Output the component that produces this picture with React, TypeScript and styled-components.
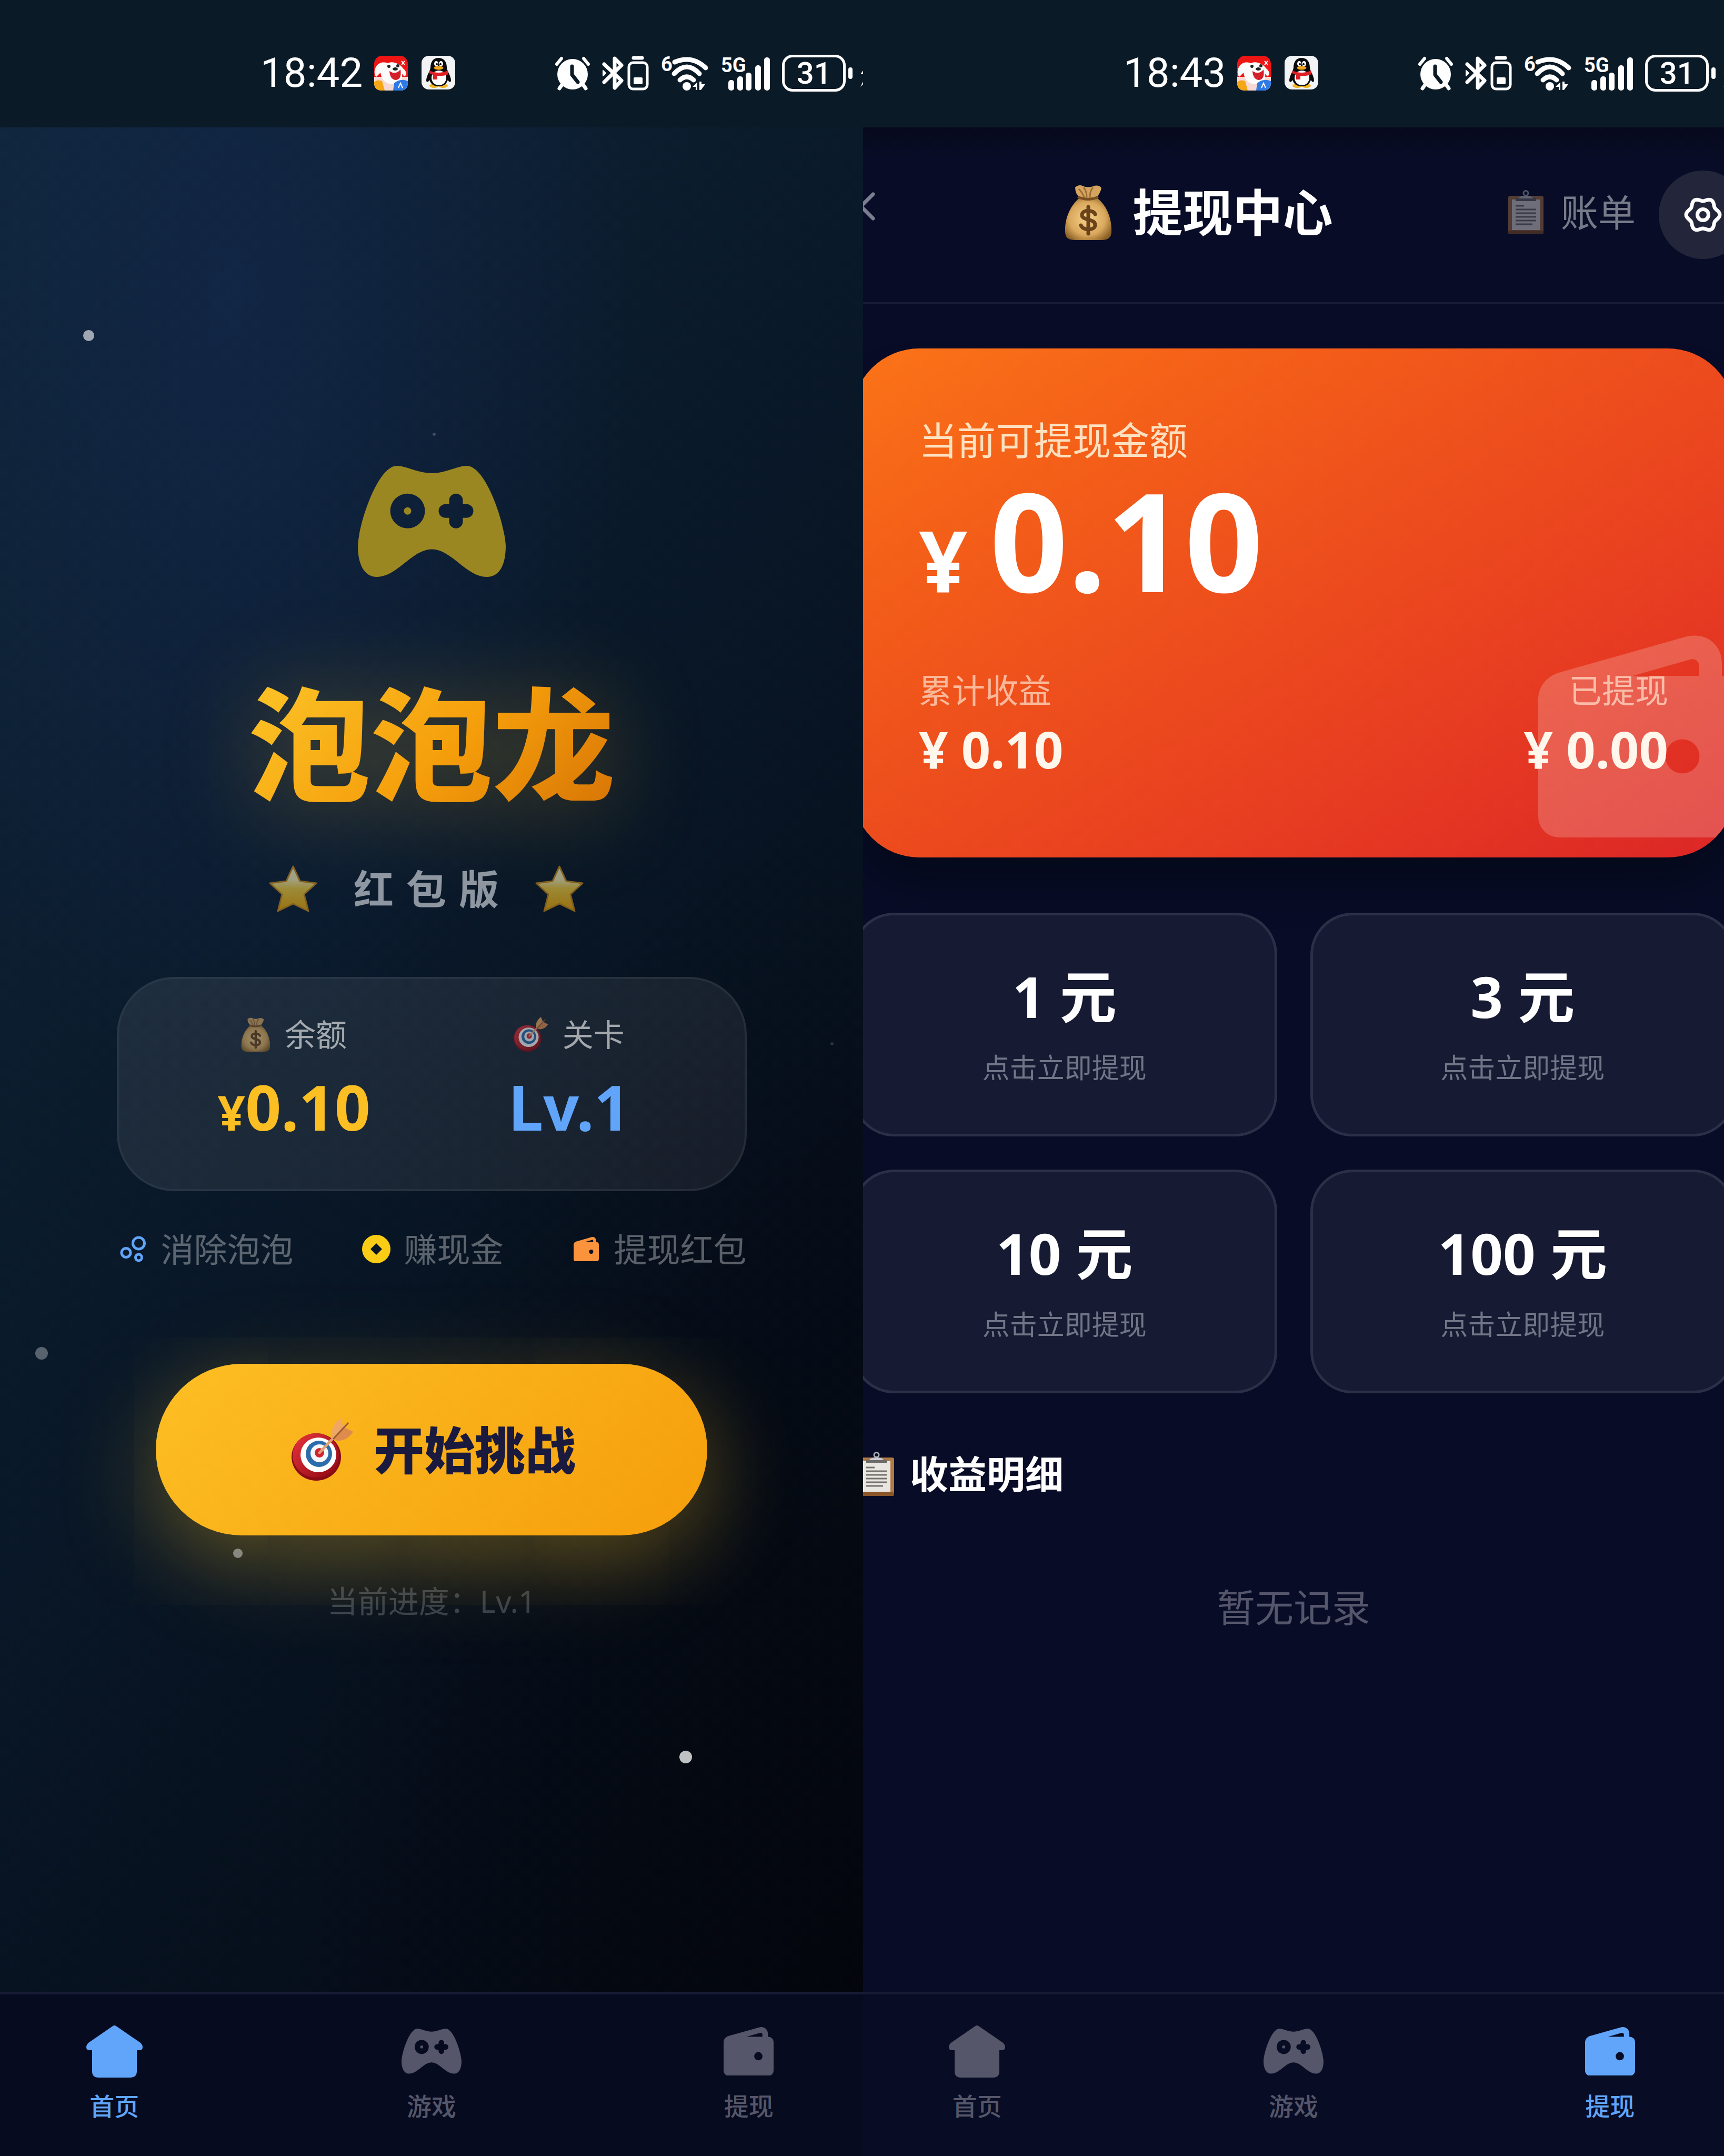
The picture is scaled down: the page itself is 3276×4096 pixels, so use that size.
import React, { useId } from "react";
import styled, { createGlobalStyle } from "styled-components";

const GlobalStyle = createGlobalStyle`
  *, *::before, *::after { box-sizing: border-box; }
  html, body { margin: 0; padding: 0; background: #080c24; }
  body { font-family: "Noto Sans", "Noto Sans CJK SC", sans-serif; color: #fff; }
  button { appearance: none; border: 0; margin: 0; padding: 0; background: none; color: inherit; font: inherit; cursor: pointer; }
  a { color: inherit; text-decoration: none; }
  h1, h2, p, dl, dt, dd { margin: 0; font-weight: inherit; }
  svg { display: block; flex: none; }
`;

/* ---------- layout shell ---------- */

const Page = styled.div`
  display: grid;
  grid-template-columns: 410fr 409fr;
  min-height: 100vh;
`;

const Screen = styled.section<{ $home?: boolean }>`
  position: relative;
  display: flex;
  flex-direction: column;
  min-width: 0;
  overflow: hidden;
  background: ${(p) =>
    p.$home
      ? `radial-gradient(ellipse 760px 1500px at 27% 14%, rgba(20, 40, 78, 0.66), rgba(20, 40, 78, 0) 100%),
         radial-gradient(ellipse 1100px 2600px at 100% 100%, rgba(3, 4, 10, 0.7), rgba(3, 4, 10, 0) 100%),
         linear-gradient(125deg, #10273a 0%, #0a1a2b 40%, #060f1c 70%, #04070f 100%)`
      : "#080c26"};
`;

/* The phone canvas is a little wider than its frame, so both sides bleed out. */
const Canvas = styled.div`
  flex: 1;
  display: flex;
  flex-direction: column;
  margin: 0 -84px;
`;

const StatusBar = styled.header`
  display: flex;
  align-items: center;
  height: 242px;
  padding: 36px 0 0 579px;
  background: #0b1a27;
`;

const Clock = styled.time`
  font-family: Roboto, "Noto Sans", sans-serif;
  font-size: 78px;
  line-height: 96px;
`;

const AppIcons = styled.div`
  display: flex;
  gap: 26px;
  margin-left: 22px;
`;

const Indicators = styled.div`
  display: flex;
  align-items: center;
  gap: 22px;
  margin-left: 189px;
`;

/* ---------- bottom navigation ---------- */

const TabBar = styled.nav<{ $dark?: boolean }>`
  display: grid;
  grid-template-columns: repeat(3, 1fr);
  height: 312px;
  border-top: 5px solid #181b34;
  background: ${(p) => (p.$dark ? "#070b1f" : "#080c25")};
`;

const Tab = styled.a<{ $active?: boolean }>`
  display: flex;
  flex-direction: column;
  align-items: center;
  padding-top: 54px;
  gap: 18px;
  color: ${(p) => (p.$active ? "#60a5fa" : "#555669")};
  font-size: 47px;
  font-weight: 500;
  line-height: 64px;
`;

const TabIcon = styled.span`
  display: flex;
  align-items: center;
  height: 108px;
`;

/* ---------- home ---------- */

const Home = styled.main`
  position: relative;
  flex: 1;
  display: flex;
  flex-direction: column;
  align-items: center;
  padding-top: 643px;
`;

const Sparkle = styled.i<{ $x: number; $y: number; $size: number; $alpha: number }>`
  position: absolute;
  left: ${(p) => p.$x}px;
  top: ${(p) => p.$y}px;
  width: ${(p) => p.$size}px;
  height: ${(p) => p.$size}px;
  border-radius: 50%;
  background: rgba(255, 255, 255, ${(p) => p.$alpha});
`;

const GameTitle = styled.h1`
  margin-top: 167px;
  font-size: 232px;
  font-weight: 900;
  line-height: 300px;
  background: linear-gradient(135deg, #fbbf24 10%, #f59e0b 55%, #d97706 95%);
  background-clip: text;
  -webkit-background-clip: text;
  color: transparent;
  filter: drop-shadow(0 10px 90px rgba(251, 191, 36, 0.32));
`;

const Tagline = styled.div`
  display: flex;
  align-items: center;
  gap: 44px;
  margin-top: 66px;
  padding-right: 20px;
  opacity: 0.62;
`;

const TaglineText = styled.p`
  padding-left: 24px;
  font-size: 76px;
  font-weight: 700;
  letter-spacing: 24px;
  line-height: 120px;
  color: #dfe3ea;
`;

const Column = styled.div`
  width: 100%;
  max-width: 1197px;
`;

const Stats = styled.dl`
  display: grid;
  grid-template-columns: 1fr 1fr;
  gap: 48px;
  margin-top: 107px;
  padding: 63px 96px 87px;
  border: 4px solid rgba(255, 255, 255, 0.12);
  border-radius: 110px;
  background: linear-gradient(115deg, rgba(255, 255, 255, 0.08), rgba(255, 240, 240, 0.07));
  background-clip: padding-box;
`;

const Stat = styled.div`
  display: flex;
  flex-direction: column;
  align-items: center;
  gap: 25px;
`;

const StatLabel = styled.dt`
  display: flex;
  align-items: center;
  gap: 27px;
  font-size: 59px;
  line-height: 84px;
  opacity: 0.6;
`;

const StatValue = styled.dd<{ $tone: string }>`
  font-size: 119px;
  font-weight: 700;
  line-height: 140px;
  color: ${(p) => p.$tone};
  small { font-size: 92px; line-height: 1; }
`;

const Features = styled.ul`
  display: flex;
  justify-content: space-between;
  margin: 65px 0 0;
  padding: 0;
  list-style: none;
`;

const Feature = styled.li`
  display: flex;
  align-items: center;
  gap: 21px;
  font-size: 63px;
  line-height: 90px;
  color: rgba(255, 255, 255, 0.34);
`;

const FeatureIcon = styled.span`
  display: flex;
  justify-content: center;
  width: 63px;
`;

const StartButton = styled.button`
  display: flex;
  align-items: center;
  justify-content: center;
  gap: 38px;
  width: 1048px;
  height: 326px;
  margin-top: 173px;
  padding-left: 8px;
  border-radius: 163px;
  background: linear-gradient(135deg, #fdbf24 0%, #f59e0b 100%);
  box-shadow: 0 46px 180px rgba(251, 191, 36, 0.38);
  color: #1a1a3e;
  font-size: 96px;
  font-weight: 900;
  line-height: 130px;
`;

const Progress = styled.p`
  position: relative;
  margin-top: 82px;
  font-size: 58px;
  line-height: 86px;
  color: rgba(255, 255, 255, 0.2);
`;

/* ---------- withdraw ---------- */

const TopBar = styled.div`
  position: relative;
  display: flex;
  align-items: center;
  justify-content: space-between;
  padding: 101px 252px 111px 63px;
  border-bottom: 4px solid #171b36;
  background: linear-gradient(180deg, #070a1d 0, #080c26 60px);
`;

const BackButton = styled.button`
  padding-bottom: 22px;
  color: #7c7d90;
`;

const TopTitle = styled.h1`
  display: flex;
  align-items: center;
  gap: 39px;
  font-size: 95px;
  font-weight: 700;
  line-height: 120px;
`;

const BillButton = styled.button`
  display: flex;
  align-items: center;
  gap: 33px;
  font-size: 71px;
  line-height: 96px;
  opacity: 0.45;
`;

const SettingsButton = styled.button`
  position: absolute;
  right: 40px;
  top: 82px;
  display: flex;
  align-items: center;
  justify-content: center;
  width: 168px;
  height: 168px;
  border-radius: 50%;
  background: #23263b;
`;

const Wallet = styled.main`
  flex: 1;
  padding: 84px 63px 0;
`;

const BalanceCard = styled.section`
  position: relative;
  padding: 126px 127px 143px;
  overflow: hidden;
  border-radius: 128px;
  background: linear-gradient(150deg, #fb7418 0%, #f46018 22%, #e63a22 74%, #dc2626 100%);
`;

const BalanceShadow = styled.div`
  border-radius: 128px;
  box-shadow: 0 60px 80px -20px rgba(4, 7, 16, 0.55);
`;

const Watermark = styled.span`
  position: absolute;
  right: -20px;
  bottom: 38px;
  color: rgba(255, 255, 255, 0.2);
`;

const BalanceLabel = styled.p`
  font-size: 73px;
  line-height: 96px;
  color: rgba(255, 246, 220, 0.86);
`;

const BalanceValue = styled.p`
  margin-top: 10px;
  font-size: 260px;
  font-weight: 700;
  line-height: 260px;
  small { font-size: 162px; line-height: 1; }
`;

const Totals = styled.dl`
  position: relative;
  display: flex;
  justify-content: space-between;
  margin-top: 114px;
`;

const Total = styled.div<{ $end?: boolean }>`
  text-align: ${(p) => (p.$end ? "right" : "left")};
  dt { font-size: 63px; line-height: 86px; color: rgba(255, 225, 205, 0.72); }
  dd { margin-top: 4px; font-size: 97px; font-weight: 700; line-height: 128px; color: #fff6ec; }
`;

const AmountGrid = styled.div`
  display: grid;
  grid-template-columns: 1fr 1fr;
  gap: 63px;
  margin-top: 105px;
`;

const AmountCard = styled.button`
  display: flex;
  flex-direction: column;
  align-items: center;
  gap: 29px;
  padding: 87px 0;
  border: 5px solid #2c3047;
  border-radius: 80px;
  background: #161a32;
  strong { font-size: 108px; font-weight: 700; line-height: 134px; }
  span { font-size: 52px; line-height: 78px; color: #727487; }
`;

const SectionTitle = styled.h2`
  display: flex;
  align-items: center;
  gap: 30px;
  margin-top: 105px;
  padding-left: 13px;
  font-size: 73px;
  font-weight: 700;
  line-height: 96px;
`;

const Empty = styled.p`
  margin-top: 157px;
  text-align: center;
  font-size: 73px;
  line-height: 96px;
  color: #55566b;
`;

/* ---------- icons ---------- */

const GamepadIcon = ({ width, color }: { width: number; color?: string }) => (
  <svg width={width} height={(width * 211) / 281} viewBox="0 0 281 211" fill={color ?? "currentColor"} aria-hidden="true">
    <path
      fillRule="evenodd"
      d="M74 0C92 0 114 14 140.500 14S189 0 207 0C243 0 279 108 281 152C281 187 270 211 245 211C206 211 178 158.500 140.500 158.500S75 211 36 211C12 211 0 187 0 152C2 108 38 0 74 0Z
         M94.500 52.700a33 33 0 1 0 0 66a33 33 0 1 0 0-66ZM94.500 78.700a7 7 0 1 1 0 14a7 7 0 1 1 0-14Z
         M173.500 72.700v-7a13 13 0 0 1 26 0v7h7a13 13 0 0 1 0 26h-7v7a13 13 0 0 1-26 0v-7h-7a13 13 0 0 1 0-26Z"
    />
  </svg>
);

const WalletIcon = ({ width, color }: { width: number; color?: string }) => (
  <svg width={width} height={(width * 384) / 394} viewBox="0 0 394 384" fill={color ?? "currentColor"} aria-hidden="true">
    <path
      fillRule="evenodd"
      d="M0 122C0 98 15 79 39 71L279 3C319-8 349 18 349 53V77C376 77 394 94 394 120V340C394 366 378 384 352 384H42C16 384 0 366 0 342Z
         M180 77L288 46C299 43 306 50 306 60V77ZM274 197.500a32.500 32.500 0 1 0 0 65a32.500 32.500 0 1 0 0-65Z"
    />
  </svg>
);

const HouseIcon = () => (
  <svg width="107" height="99" viewBox="0 0 107 99" fill="currentColor" aria-hidden="true">
    <path d="M49 2Q53.500-2 58 2L103 33Q107 37 107 41Q107 47 101 47H96V87Q96 99 84 99H23Q11 99 11 87V47H6Q0 47 0 41Q0 37 4 33Z" />
  </svg>
);

const MoneyBagIcon = ({ size }: { size: number }) => {
  const id = useId();
  return (
    <svg width={(size * 90) / 105} height={size} viewBox="0 0 90 105" aria-hidden="true">
      <defs>
        <radialGradient id={id} cx="0.48" cy="0.5" r="0.6">
          <stop offset="0" stopColor="#f7d28a" />
          <stop offset="0.65" stopColor="#d9a85c" />
          <stop offset="1" stopColor="#8a6026" />
        </radialGradient>
      </defs>
      <path d="M20 5Q28-2 36 3Q45 6 54 3Q64-1 70 6Q68 16 60 25H30Q20 18 20 5Z" fill="#d5a560" />
      <path d="M36 5Q42 12 42 23M54 5Q48 12 48 23M27 8Q34 15 37 24" fill="none" stroke="#9c6e35" strokeWidth="3" />
      <path d="M30 24H60C78 36 90 62 89 88C89 101 82 105 70 105H20C7 105 1 101 1 88C0 62 13 36 30 24Z" fill={`url(#${id})`} />
      <path d="M27 24Q45 31 62 24" fill="none" stroke="#7a5022" strokeWidth="5" strokeLinecap="round" />
      <path
        d="M58 56C56 48 34 46 33 57C32 69 59 63 58 77C57 88 34 87 31 77M45 42V93"
        fill="none"
        stroke="#6b431a"
        strokeWidth="7"
        strokeLinecap="round"
      />
    </svg>
  );
};

const TargetIcon = ({ size }: { size: number }) => {
  const id = useId();
  return (
    <svg width={size} height={size} viewBox="0 0 118 118" aria-hidden="true">
      <defs>
        <linearGradient id={id} x1="0" y1="0" x2="1" y2="1">
          <stop offset="0" stopColor="#e8343e" />
          <stop offset="1" stopColor="#8d0710" />
        </linearGradient>
      </defs>
      <ellipse cx="47" cy="73" rx="47" ry="45" fill="#8b0c16" />
      <ellipse cx="46" cy="70" rx="44" ry="42" fill={`url(#${id})`} />
      <ellipse cx="51" cy="69" rx="34" ry="33" fill="#fff" />
      <ellipse cx="52" cy="67" rx="25" ry="25" fill="#2c6cab" />
      <ellipse cx="53" cy="66" rx="17" ry="17" fill="#f6f7fb" />
      <ellipse cx="53" cy="65" rx="9" ry="9" fill="#cf2531" />
      <path d="M53 65L100 15" stroke="#e2a173" strokeWidth="5" strokeLinecap="round" />
      <path d="M78 38C72 25 80 9 93 0L98 14Z" fill="#efa763" />
      <path d="M80 40C94 46 109 38 117 25L101 17Z" fill="#e08b4e" />
      <path d="M79 39L108 8" stroke="#9a5a2c" strokeWidth="3" />
    </svg>
  );
};

const ClipboardIcon = () => (
  <svg width="67" height="84" viewBox="0 0 67 84" aria-hidden="true">
    <rect x="0" y="11" width="67" height="73" rx="4" fill="#b17a45" />
    <rect x="0" y="77" width="67" height="7" rx="3" fill="#8a5527" />
    <path d="M7 18H60V76H7Z" fill="#e9e6e1" />
    <rect x="14" y="15" width="39" height="6" fill="#6f6b68" />
    <circle cx="33.500" cy="6" r="4.500" fill="none" stroke="#a9adb3" strokeWidth="3" />
    <path d="M20 16Q21 11 33.500 11T47 16Z" fill="#c9ccd0" />
    <path d="M14 30H30M14 37H53M14 44H53M14 51H53M14 58H53M14 65H46" stroke="#74726f" strokeWidth="3" />
  </svg>
);

const StarIcon = () => {
  const id = useId();
  return (
    <svg width="94" height="92" viewBox="0 0 94 92" aria-hidden="true">
      <defs>
        <linearGradient id={id} x1="0" y1="0" x2="0" y2="1">
          <stop offset="0" stopColor="#fff6c4" />
          <stop offset="0.3" stopColor="#fbf0b0" />
          <stop offset="0.5" stopColor="#f6cf3e" />
          <stop offset="1" stopColor="#f0a800" />
        </linearGradient>
      </defs>
      <path
        d="M47 3L60 31L91 35L68 56L76 88L47 74L18 88L26 56L3 35L34 31Z"
        fill={`url(#${id})`}
        stroke="#c98a1c"
        strokeWidth="3"
        strokeLinejoin="round"
      />
    </svg>
  );
};

const BubblesIcon = () => (
  <svg width="50" height="50" viewBox="0 0 50 50" fill="none" stroke="#60a5fa" strokeWidth="5" aria-hidden="true">
    <circle cx="35.500" cy="14" r="11" />
    <circle cx="11.500" cy="32" r="8.500" />
    <circle cx="35.500" cy="41" r="6" />
  </svg>
);

const CoinIcon = () => (
  <svg width="54" height="54" viewBox="0 0 54 54" aria-hidden="true">
    <path fill="#facc15" fillRule="evenodd" d="M27 0a27 27 0 1 0 0 54a27 27 0 1 0 0-54ZM27 16L38 27L27 38L16 27Z" />
  </svg>
);

const ChevronIcon = () => (
  <svg width="71" height="54" viewBox="0 0 71 54" fill="none" stroke="currentColor" strokeWidth="7" strokeLinecap="round" strokeLinejoin="round" aria-hidden="true">
    <path d="M40 4L17 27L40 50" />
  </svg>
);

const gearOutline = Array.from({ length: 72 }, (_, i) => {
  const a = (i / 72) * Math.PI * 2;
  const r = 29 + 3 * Math.cos(6 * a);
  return `${(36 + r * Math.cos(a)).toFixed(1)},${(36 + r * Math.sin(a)).toFixed(1)}`;
}).join(" ");

const GearIcon = () => (
  <svg width="72" height="72" viewBox="0 0 72 72" fill="none" stroke="#fff" strokeWidth="7" strokeLinejoin="round" aria-hidden="true">
    <polygon points={gearOutline} />
    <circle cx="36" cy="36" r="10.500" strokeWidth="7" />
  </svg>
);

const DogAppIcon = () => (
  <svg width="64" height="66" viewBox="0 0 64 66" aria-hidden="true">
    <rect width="64" height="66" rx="15" fill="#ee1515" />
    <path d="M0 40H64V51Q64 66 49 66H15Q0 66 0 51Z" fill="#f7d9d3" />
    <path d="M2 24C8 10 20 12 26 14C36 9 50 16 55 24C63 30 62 38 57 39L53 34C55 48 46 54 36 54C20 54 14 44 12 32L4 40C0 36 0 29 2 24Z" fill="#fbfbfb" />
    <path d="M29 29Q41 37 50 26Q53 46 40 46Q30 44 29 29Z" fill="#d5202a" />
    <circle cx="28" cy="20" r="3" fill="#222" />
    <circle cx="45" cy="19" r="3" fill="#222" />
    <ellipse cx="40" cy="25" rx="5" ry="3" fill="#222" />
    <path d="M0 50Q6 44 15 48L20 66H15Q0 66 0 51Z" fill="#f5a614" />
    <path d="M38 52Q50 42 64 48V51Q64 66 49 66H36Z" fill="#2f7be6" />
    <path d="M46 61L50 52L54 61" fill="none" stroke="#fff" strokeWidth="2" />
    <path d="M52 10L58 17M58 10L52 17" stroke="#fff" strokeWidth="2" />
  </svg>
);

const PenguinAppIcon = () => (
  <svg width="64" height="64" viewBox="0 0 64 64" aria-hidden="true">
    <rect width="64" height="64" rx="14" fill="#f2f3f5" />
    <ellipse cx="24" cy="57" rx="9" ry="4" fill="#f2b524" />
    <ellipse cx="41" cy="57" rx="9" ry="4" fill="#f2b524" />
    <path d="M32 4C43 4 48 12 48 22C48 28 55 36 56 46C56 52 52 50 50 46C47 54 42 58 33 58C23 58 18 54 15 46C13 50 9 52 9 46C10 36 17 28 17 22C17 12 22 4 32 4Z" fill="#0b0b0d" />
    <ellipse cx="33" cy="42" rx="14" ry="14" fill="#fff" />
    <ellipse cx="28" cy="15" rx="4" ry="5" fill="#fff" />
    <ellipse cx="37" cy="15" rx="4" ry="5" fill="#fff" />
    <circle cx="29" cy="16" r="2" fill="#000" />
    <circle cx="36" cy="16" r="2" fill="#000" />
    <ellipse cx="32.500" cy="23" rx="9" ry="3.500" fill="#f5a81c" />
    <path d="M15 28Q32 36 50 28L51 35Q42 39 30 38V45H22V36L14 33Z" fill="#dd1f26" />
  </svg>
);

const AlarmIcon = () => (
  <svg width="68" height="66" viewBox="0 0 68 66" fill="none" stroke="#fff" strokeLinecap="round" aria-hidden="true">
    <circle cx="34" cy="35" r="29" fill="#fff" stroke="none" />
    <path d="M4 16L13 5M64 16L55 5" strokeWidth="6" />
    <path d="M16 52L9 62M52 52L59 62" strokeWidth="7" />
    <path d="M33 20V36L44 50" stroke="#0b1a27" strokeWidth="7" strokeLinejoin="round" />
  </svg>
);

const BluetoothIcon = () => (
  <svg width="90" height="66" viewBox="0 0 90 66" fill="none" stroke="#fff" strokeLinecap="round" strokeLinejoin="round" aria-hidden="true">
    <path d="M4 16L37 47L24 61V5L37 18L4 50" strokeWidth="7" />
    <path d="M2 28L7 33L2 38Z" fill="#fff" strokeWidth="2" />
    <rect x="51" y="13" width="35" height="50" rx="8" strokeWidth="5" />
    <path d="M60 4H76" strokeWidth="7" />
    <rect x="60" y="41" width="17" height="13" rx="2" fill="#fff" stroke="none" />
  </svg>
);

const SmallGlyph = styled.text`
  font-family: Roboto, "Noto Sans", sans-serif;
  font-size: 38px;
  font-weight: 700;
  fill: #fff;
`;

const WifiIcon = () => (
  <svg width="92" height="90" viewBox="0 -10 92 90" fill="none" stroke="#fff" strokeWidth="9" strokeLinecap="round" role="img" aria-label="Wi-Fi 6">
    <SmallGlyph x="0" y="31" stroke="none">6</SmallGlyph>
    <path d="M26 14Q59 0 85 25M25 36Q49 10 73 36M36 48Q49 36 62 48" />
    <circle cx="49" cy="60" r="8" fill="#fff" stroke="none" />
    <path d="M60 61L69 52V67H66V61ZM73 51V67H76L84 56H77V51Z" fill="#fff" stroke="none" />
  </svg>
);

const signalBars = [
  [19, 48],
  [36, 41],
  [52, 34],
  [70, 20],
  [87, 5],
];

const SignalIcon = () => (
  <svg width="94" height="90" viewBox="0 -10 94 90" role="img" aria-label="5G">
    <SmallGlyph x="0" y="33">5G</SmallGlyph>
    {signalBars.map(([x, y]) => (
      <rect key={x} x={x - 5} y={y} width="11" height={68 - y} rx="5" fill="#fff" />
    ))}
  </svg>
);

const Battery = styled.span`
  display: flex;
  align-items: center;
  gap: 5px;
`;

const BatteryTip = styled.i`
  width: 8px;
  height: 22px;
  border-radius: 4px;
  background: #fff;
`;

const BatteryLevel = styled.span`
  display: flex;
  align-items: center;
  justify-content: center;
  width: 121px;
  height: 70px;
  border: 5px solid #fff;
  border-radius: 20px;
  font-family: Roboto, "Noto Sans", sans-serif;
  font-size: 58px;
  font-weight: 500;
  line-height: 60px;
`;

const BoltIcon = () => (
  <svg width="44" height="52" viewBox="0 0 44 52" fill="#fff" aria-hidden="true">
    <path d="M30 0L10 28H22L10 52L42 20H28Z" />
  </svg>
);

/* ---------- parts ---------- */

const PhoneStatus = ({ time }: { time: string }) => (
  <StatusBar>
    <Clock>{time}</Clock>
    <AppIcons>
      <DogAppIcon />
      <PenguinAppIcon />
    </AppIcons>
    <Indicators>
      <AlarmIcon />
      <BluetoothIcon />
      <WifiIcon />
      <SignalIcon />
      <Battery>
        <BatteryLevel>31</BatteryLevel>
        <BatteryTip />
        <BoltIcon />
      </Battery>
    </Indicators>
  </StatusBar>
);

type TabName = "home" | "game" | "wallet";

const tabs: { name: TabName; label: string; icon: React.ReactNode }[] = [
  { name: "home", label: "首页", icon: <HouseIcon /> },
  { name: "game", label: "游戏", icon: <GamepadIcon width={114} /> },
  { name: "wallet", label: "提现", icon: <WalletIcon width={95} /> },
];

const BottomTabs = ({ active, dark }: { active: TabName; dark?: boolean }) => (
  <TabBar $dark={dark}>
    {tabs.map((t) => (
      <Tab key={t.name} href={`#${t.name}`} $active={t.name === active}>
        <TabIcon>{t.icon}</TabIcon>
        {t.label}
      </Tab>
    ))}
  </TabBar>
);

const sparkles = [
  { x: 242, y: 385, size: 21, alpha: 0.6 },
  { x: 151, y: 2317, size: 24, alpha: 0.32 },
  { x: 527, y: 2700, size: 18, alpha: 0.42 },
  { x: 1375, y: 3084, size: 24, alpha: 0.75 },
  { x: 906, y: 580, size: 6, alpha: 0.2 },
  { x: 1662, y: 1738, size: 6, alpha: 0.15 },
];

const HomeScreen = () => (
  <Screen $home>
    <Canvas>
      <PhoneStatus time="18:42" />
      <Home>
        <GamepadIcon width={281} color="#9b8722" />
        <GameTitle>泡泡龙</GameTitle>
        <Tagline>
          <StarIcon />
          <TaglineText>红包版</TaglineText>
          <StarIcon />
        </Tagline>
        <Column>
          <Stats>
            <Stat>
              <StatLabel>
                <MoneyBagIcon size={65} />
                余额
              </StatLabel>
              <StatValue $tone="#fbbf24">
                <small>¥</small>0.10
              </StatValue>
            </Stat>
            <Stat>
              <StatLabel>
                <TargetIcon size={66} />
                关卡
              </StatLabel>
              <StatValue $tone="#60a5fa">Lv.1</StatValue>
            </Stat>
          </Stats>
          <Features>
            <Feature>
              <FeatureIcon><BubblesIcon /></FeatureIcon>
              消除泡泡
            </Feature>
            <Feature>
              <FeatureIcon><CoinIcon /></FeatureIcon>
              赚现金
            </Feature>
            <Feature>
              <FeatureIcon><WalletIcon width={48} color="#fb923c" /></FeatureIcon>
              提现红包
            </Feature>
          </Features>
        </Column>
        <StartButton>
          <TargetIcon size={118} />
          开始挑战
        </StartButton>
        <Progress>当前进度：Lv.1</Progress>
        {sparkles.map((s) => (
          <Sparkle key={`${s.x}-${s.y}`} $x={s.x} $y={s.y} $size={s.size} $alpha={s.alpha} />
        ))}
      </Home>
      <BottomTabs active="home" dark />
    </Canvas>
  </Screen>
);

const amounts = [1, 3, 10, 100];

const WithdrawScreen = () => (
  <Screen>
    <Canvas>
      <PhoneStatus time="18:43" />
      <TopBar>
        <BackButton aria-label="返回"><ChevronIcon /></BackButton>
        <TopTitle>
          <MoneyBagIcon size={105} />
          提现中心
        </TopTitle>
        <BillButton>
          <ClipboardIcon />
          账单
        </BillButton>
        <SettingsButton aria-label="设置"><GearIcon /></SettingsButton>
      </TopBar>
      <Wallet>
        <BalanceShadow>
          <BalanceCard>
            <Watermark><WalletIcon width={394} /></Watermark>
            <BalanceLabel>当前可提现金额</BalanceLabel>
            <BalanceValue>
              <small>¥ </small>0.10
            </BalanceValue>
            <Totals>
              <Total>
                <dt>累计收益</dt>
                <dd>¥ 0.10</dd>
              </Total>
              <Total $end>
                <dt>已提现</dt>
                <dd>¥ 0.00</dd>
              </Total>
            </Totals>
          </BalanceCard>
        </BalanceShadow>
        <AmountGrid>
          {amounts.map((n) => (
            <AmountCard key={n}>
              <strong>{n} 元</strong>
              <span>点击立即提现</span>
            </AmountCard>
          ))}
        </AmountGrid>
        <SectionTitle>
          <ClipboardIcon />
          收益明细
        </SectionTitle>
        <Empty>暂无记录</Empty>
      </Wallet>
      <BottomTabs active="wallet" />
    </Canvas>
  </Screen>
);

export default function App() {
  return (
    <>
      <GlobalStyle />
      <Page>
        <HomeScreen />
        <WithdrawScreen />
      </Page>
    </>
  );
}
